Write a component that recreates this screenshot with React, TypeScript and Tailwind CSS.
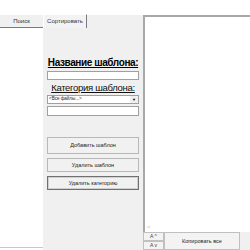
export default function App() {
  return (
    <div className="w-[250px] h-[250px] bg-white overflow-hidden flex flex-col text-black whitespace-nowrap" style={{ fontFamily: '"Liberation Sans", Arial, sans-serif' }}>
      <div className="h-[15px] shrink-0" />
      <div className="flex flex-1 min-h-0">
        {/* left column */}
        <div className="w-[43px] flex flex-col shrink-0">
          <div className="h-[13px] bg-[#f0f0f0] border-b border-[#7a7a7a] flex items-center justify-center text-[6px] text-[#333]">Поиск</div>
          <div className="flex-1 bg-white border-b border-[#c8c8c8] mb-[2px]" />
        </div>
        {/* middle panel */}
        <div className="w-[100px] bg-[#f0f0f0] flex flex-col shrink-0">
          <div className="h-[14px] -mt-px w-[44px] bg-[#f3f3f3] border-t border-l border-white border-r border-r-[#7a7a7a] flex items-center justify-center text-[6px] text-[#333]">Сортировать</div>
          <div className="px-[4px] pt-[29px] flex flex-col">
            <div className="text-[10px] font-bold underline leading-[12px] text-center tracking-[-0.4px]">Название шаблона:</div>
            <div className="h-[9px] mt-[2px] bg-white border border-[#a0a0a0]" />
            <div className="text-[9.5px] underline leading-[12px] text-center mt-[2px] text-[#111] tracking-[-0.3px]">Категория шаблона:</div>
            <div className="h-[9px] mt-[1px] bg-white border border-[#a0a0a0] flex items-center justify-between pl-[1px]">
              <span className="text-[4.5px] text-[#222]">&lt;Все файлы...&gt;</span>
              <span className="w-[8px] h-[7px] bg-[#f0f0f0] flex items-center justify-center text-[4px]">▼</span>
            </div>
            <div className="h-[10px] mt-[2px] bg-white border border-[#a0a0a0]" />
            <div className="h-[17px] mt-[21px] bg-[#f1f1f1] border border-[#b8b8b8] flex items-center justify-center text-[5.5px] text-[#222]">Добавить шаблон</div>
            <div className="h-[14px] mt-[4px] bg-[#f1f1f1] border border-[#b8b8b8] flex items-center justify-center text-[5.5px] text-[#222]">Удалить шаблон</div>
            <div className="h-[14px] mt-[4px] bg-[#f1f1f1] border border-[#707070] flex items-center justify-center text-[5.5px] text-[#222]">
              <div className="w-full h-full border border-[#d0d0d0] flex items-center justify-center">Удалить категорию</div>
            </div>
          </div>
        </div>
        {/* right column */}
        <div className="flex-1 flex flex-col bg-[#f0f0f0]">
          <div className="flex-1 bg-white border-t-2 border-l-2 border-[#a8a8a8] flex flex-col justify-end">
            <div className="h-[9px] text-[6px] text-[#bbb] pl-[2px] leading-[9px]">&lt;</div>
          </div>
          <div className="h-[18px] flex shrink-0">
            <div className="w-[21px] flex flex-col">
              <div className="h-[9px] border border-[#c0c0c0] bg-[#f3f3f3] text-[5px] leading-[7px] text-center text-[#444]">A ^</div>
              <div className="h-[9px] border border-[#c0c0c0] bg-[#f3f3f3] text-[5px] leading-[7px] text-center text-[#444]">A v</div>
            </div>
            <div className="w-[76px] border border-[#c0c0c0] bg-[#f3f3f3] flex items-center justify-center text-[5.5px] text-[#222]">Копировать все</div>
          </div>
        </div>
      </div>
    </div>
  );
}
